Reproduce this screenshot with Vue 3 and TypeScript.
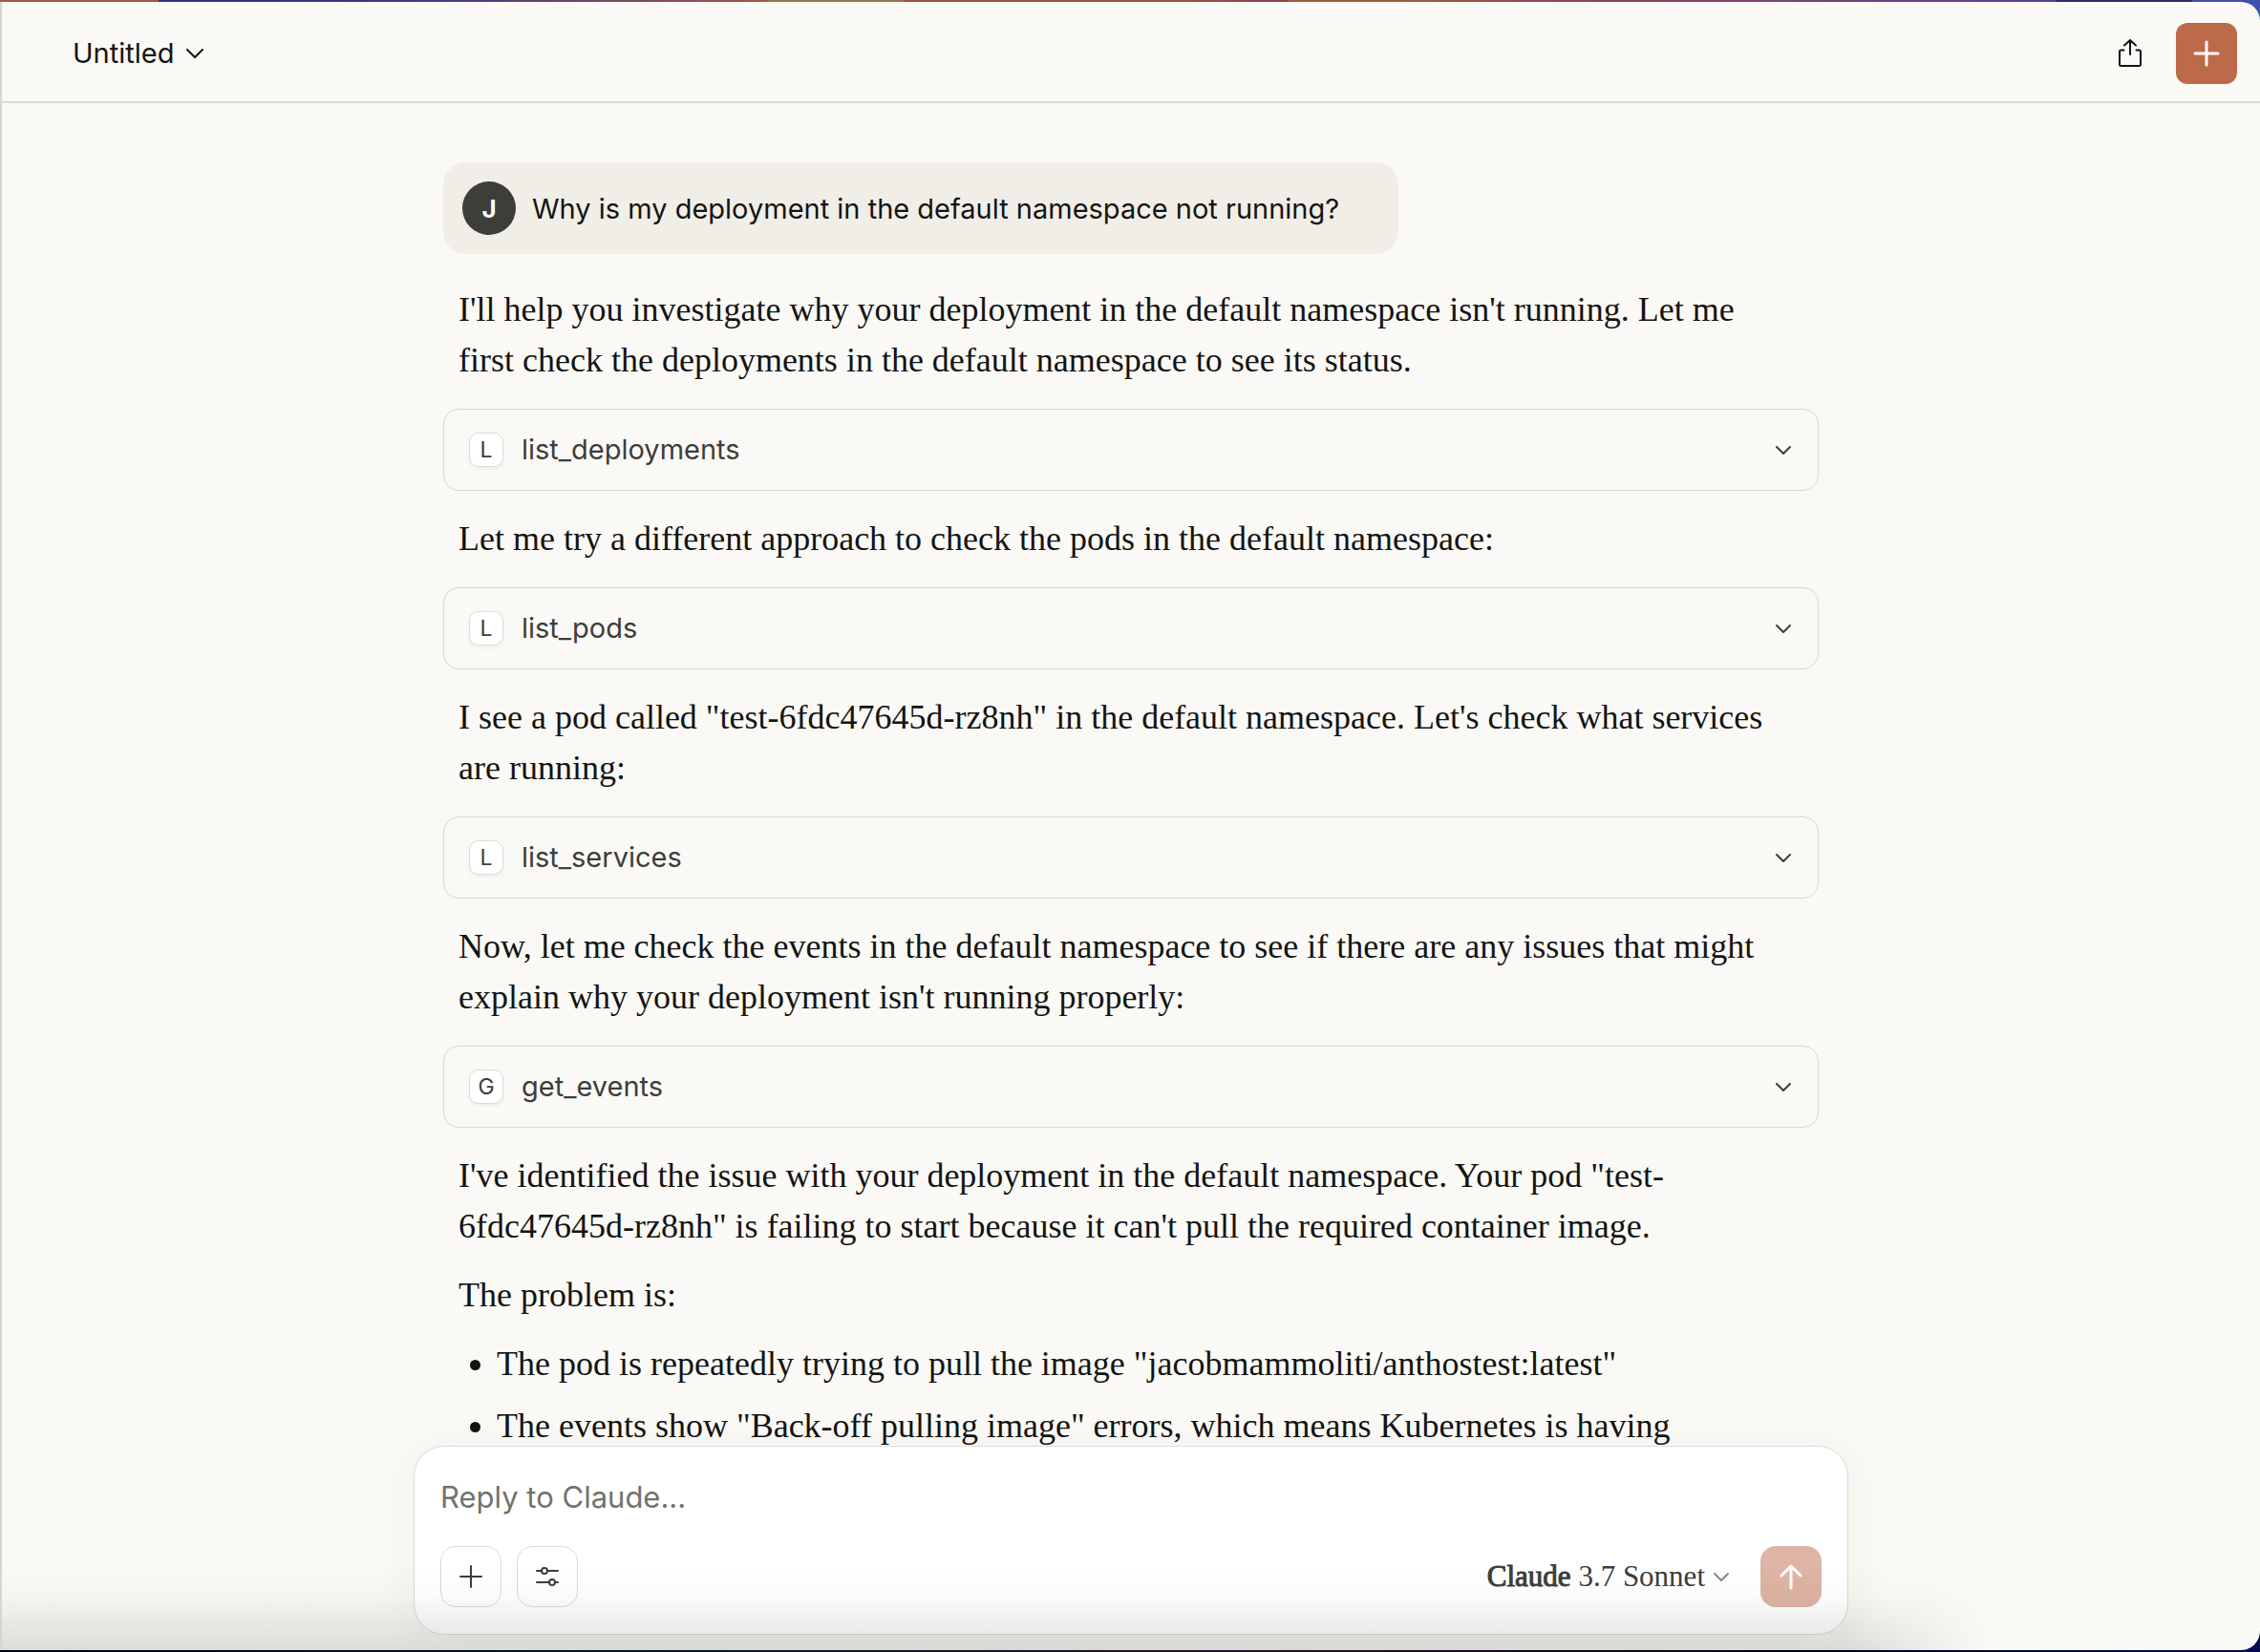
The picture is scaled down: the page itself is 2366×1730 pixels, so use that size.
<script setup lang="ts">
import { ref } from 'vue'

interface Block {
  kind: 'text' | 'tool'
  text: string
}

const title = ref('Untitled')
const draft = ref('')

const blocks: Block[] = [
  { kind: 'text', text: "I'll help you investigate why your deployment in the default namespace isn't running. Let me first check the deployments in the default namespace to see its status." },
  { kind: 'tool', text: 'list_deployments' },
  { kind: 'text', text: 'Let me try a different approach to check the pods in the default namespace:' },
  { kind: 'tool', text: 'list_pods' },
  { kind: 'text', text: 'I see a pod called "test-6fdc47645d-rz8nh" in the default namespace. Let\'s check what services are running:' },
  { kind: 'tool', text: 'list_services' },
  { kind: 'text', text: "Now, let me check the events in the default namespace to see if there are any issues that might explain why your deployment isn't running properly:" },
  { kind: 'tool', text: 'get_events' },
  { kind: 'text', text: 'I\'ve identified the issue with your deployment in the default namespace. Your pod "test-6fdc47645d-rz8nh" is failing to start because it can\'t pull the required container image.' },
  { kind: 'text', text: 'The problem is:' },
]

const problems: string[] = [
  'The pod is repeatedly trying to pull the image "jacobmammoliti/anthostest:latest"',
  'The events show "Back-off pulling image" errors, which means Kubernetes is having',
]
</script>

<template>
  <div class="desktop">
    <div class="window">
      <header class="topbar">
        <button class="title" type="button">
          {{ title }}
          <svg width="20" height="12" viewBox="0 0 20 12" fill="none" stroke="currentColor" stroke-width="2" stroke-linecap="round" stroke-linejoin="round"><path d="M2 2l8 8 8-8" /></svg>
        </button>
        <div class="actions">
          <button class="share" type="button" aria-label="Share">
            <svg width="28" height="32" viewBox="0 0 28 32" fill="none" stroke="currentColor" stroke-width="2" stroke-linecap="round" stroke-linejoin="round"><path d="M14 17V2M8 7.500L14 2l6 5.500M7.500 12.500H4.500A1.500 1.500 0 0 0 3 14v13.500A1.500 1.500 0 0 0 4.500 29h19a1.500 1.500 0 0 0 1.500-1.500V14a1.500 1.500 0 0 0-1.500-1.500H20.500" /></svg>
          </button>
          <button class="new" type="button" aria-label="New chat">
            <svg width="28" height="28" viewBox="0 0 28 28" fill="none" stroke="currentColor" stroke-width="3" stroke-linecap="round"><path d="M14 2v24M2 14h24" /></svg>
          </button>
        </div>
      </header>

      <main class="thread">
        <div class="column">
          <div class="question">
            <span class="avatar">J</span>
            <p>Why is my deployment in the default namespace not running?</p>
          </div>

          <div class="answer">
            <template v-for="(block, i) in blocks" :key="i">
              <p v-if="block.kind === 'text'">{{ block.text }}</p>
              <button v-else class="tool" type="button">
                <span class="badge">{{ block.text.charAt(0).toUpperCase() }}</span>
                <span class="name">{{ block.text }}</span>
                <svg width="18" height="11" viewBox="0 0 18 11" fill="none" stroke="currentColor" stroke-width="2" stroke-linecap="round" stroke-linejoin="round"><path d="M2 2l7 7 7-7" /></svg>
              </button>
            </template>
            <ul>
              <li v-for="item in problems" :key="item">{{ item }}</li>
            </ul>
          </div>
        </div>
      </main>

      <form class="composer" @submit.prevent>
        <textarea v-model="draft" rows="1" placeholder="Reply to Claude..." aria-label="Reply to Claude"></textarea>
        <div class="tools">
          <button class="square" type="button" aria-label="Add content">
            <svg width="24" height="24" viewBox="0 0 24 24" fill="none" stroke="currentColor" stroke-width="2" stroke-linecap="round"><path d="M12 1v22M1 12h22" /></svg>
          </button>
          <button class="square" type="button" aria-label="Settings">
            <svg width="24" height="20" viewBox="0 0 24 20" fill="none" stroke="currentColor" stroke-width="2" stroke-linecap="round"><path d="M1 4h4.500M12.500 4H23M1 16h12.500M20.500 16H23" /><circle cx="9" cy="4" r="3" /><circle cx="17" cy="16" r="3" /></svg>
          </button>
          <button class="model" type="button">
            <span><b>Claude</b> 3.7 Sonnet</span>
            <svg width="18" height="11" viewBox="0 0 18 11" fill="none" stroke="currentColor" stroke-width="2" stroke-linecap="round" stroke-linejoin="round"><path d="M2 2l7 7 7-7" /></svg>
          </button>
          <button class="send" type="submit" aria-label="Send message">
            <svg width="24" height="28" viewBox="0 0 24 28" fill="none" stroke="currentColor" stroke-width="3" stroke-linecap="round" stroke-linejoin="round"><path d="M12 26V3M2 13L12 3l10 10" /></svg>
          </button>
        </div>
      </form>
      <div class="fade"></div>
    </div>
  </div>
</template>

<style>
body {
  margin: 0;
}
</style>

<style scoped>
.desktop {
  box-sizing: border-box;
  height: 100vh;
  padding: 2px 0;
  background:
    linear-gradient(90deg, #a0574a 0 7%, #2f3480 7% 12%, #4a3a80 20%, #a0574a 34%, #94784f 34% 40%, #9c4f44 40% 52%, #8f4050 57%, #98603f 57% 62%, #96484e 67%, #6a3f86 85%, #5a3f92 91%, #2a2a68 91% 97%, #3f50b0 97%) top / 100% 30px no-repeat,
    linear-gradient(90deg, #04041c, #0a1228 30%, #1c1220 55%, #04041c 80%, #060a50);
  overflow: hidden;
}

.window {
  position: relative;
  box-sizing: border-box;
  display: flex;
  flex-direction: column;
  height: 100%;
  border-left: 2px solid #d6d5d0;
  border-radius: 0 20px 20px 0;
  background: #faf9f5;
  color: #141413;
  font-family: Inter, 'Liberation Sans', sans-serif;
  overflow: hidden;
}

button {
  display: flex;
  align-items: center;
  margin: 0;
  padding: 0;
  border: 0;
  background: none;
  color: inherit;
  font: inherit;
  cursor: pointer;
}

svg {
  flex: none;
}

p {
  margin: 0;
}

.topbar {
  flex: none;
  display: flex;
  align-items: center;
  justify-content: space-between;
  height: 100px;
  padding: 4px 24px 0 74px;
  border-bottom: 2px solid #dad9d4;
}

.title {
  gap: 12px;
  font-size: 29px;
  line-height: 40px;
}

.actions {
  display: flex;
  gap: 16px;
}

.share,
.new,
.send,
.square {
  box-sizing: border-box;
  justify-content: center;
  width: 64px;
  height: 64px;
  border-radius: 16px;
}

.new {
  border-radius: 12px;
  background: #bd6a4a;
  color: #fff;
}

.thread {
  flex: 1;
  min-height: 0;
  padding: 62px 48px 0;
  overflow: hidden;
}

.column {
  max-width: 1440px;
  margin: 0 auto;
}

.question {
  box-sizing: border-box;
  display: flex;
  align-items: center;
  gap: 17px;
  width: fit-content;
  height: 96px;
  padding: 0 62px 0 20px;
  border-radius: 24px;
  background: #f0eee6;
  font-size: 29px;
}

.avatar {
  display: grid;
  place-items: center;
  width: 56px;
  height: 56px;
  border-radius: 50%;
  background: #3d3d3a;
  color: #faf9f5;
  font-size: 26px;
  font-weight: 700;
}

.answer {
  padding-top: 32px;
  font-family: 'Liberation Serif', serif;
  font-size: 36px;
  line-height: 53px;
}

.answer p {
  padding: 0 48px 0 16px;
}

.answer p + p,
.answer ul {
  margin-top: 19px;
}

.tool {
  box-sizing: border-box;
  gap: 19px;
  width: 100%;
  height: 86px;
  margin: 24px 0;
  padding: 0 27px 0 26px;
  border: 1px solid #d9d8d4;
  border-radius: 16px;
  color: #3d3d3a;
  font-family: Inter, 'Liberation Sans', sans-serif;
  font-size: 29px;
  line-height: 40px;
}

.name {
  flex: 1;
  text-align: left;
}

.badge {
  box-sizing: border-box;
  display: grid;
  place-items: center;
  width: 36px;
  height: 36px;
  border: 1px solid #dddcda;
  border-radius: 10px;
  background: #fff;
  box-shadow: 0 2px 4px rgba(0, 0, 0, 0.06);
  font-size: 23px;
  line-height: 34px;
}

.answer ul {
  display: flex;
  flex-direction: column;
  gap: 12px;
  margin-bottom: 0;
  padding: 0 0 0 56px;
}

.composer {
  position: relative;
  flex: none;
  box-sizing: border-box;
  width: 1502px;
  max-width: calc(100% - 48px);
  margin: 0 auto 16px;
  padding: 27px 27px 28px;
  border: 1px solid #dcdbd8;
  border-radius: 32px;
  background: #fff;
  box-shadow: 0 8px 48px rgba(50, 50, 40, 0.05);
}

textarea {
  display: block;
  box-sizing: border-box;
  width: 100%;
  height: 52px;
  margin: 0 0 25px;
  padding: 0;
  border: 0;
  outline: 0;
  background: none;
  color: #141413;
  font-family: Inter, 'Liberation Sans', sans-serif;
  font-size: 31px;
  line-height: 52px;
  resize: none;
}

textarea::placeholder {
  color: #73726c;
  opacity: 1;
}

.tools {
  display: flex;
  gap: 16px;
}

.square {
  border: 1px solid #dbdad8;
  color: #3d3d3a;
}

.model {
  gap: 8px;
  margin-left: auto;
  margin-right: 16px;
  color: #3d3d3a;
  font-family: 'Liberation Serif', serif;
  font-size: 31px;
}

.model b {
  font-weight: 400;
  -webkit-text-stroke: 1px currentColor;
}

.model svg {
  color: #8a8984;
}

.send {
  background: #deb4a4;
  color: #fff;
}

.fade {
  position: absolute;
  bottom: 0;
  left: 0;
  width: 88%;
  height: 88px;
  background: linear-gradient(rgba(30, 30, 30, 0), rgba(30, 30, 30, 0.02) 35%, rgba(30, 30, 30, 0.13));
  mask-image: linear-gradient(90deg, #000 93%, transparent);
  pointer-events: none;
}
</style>
